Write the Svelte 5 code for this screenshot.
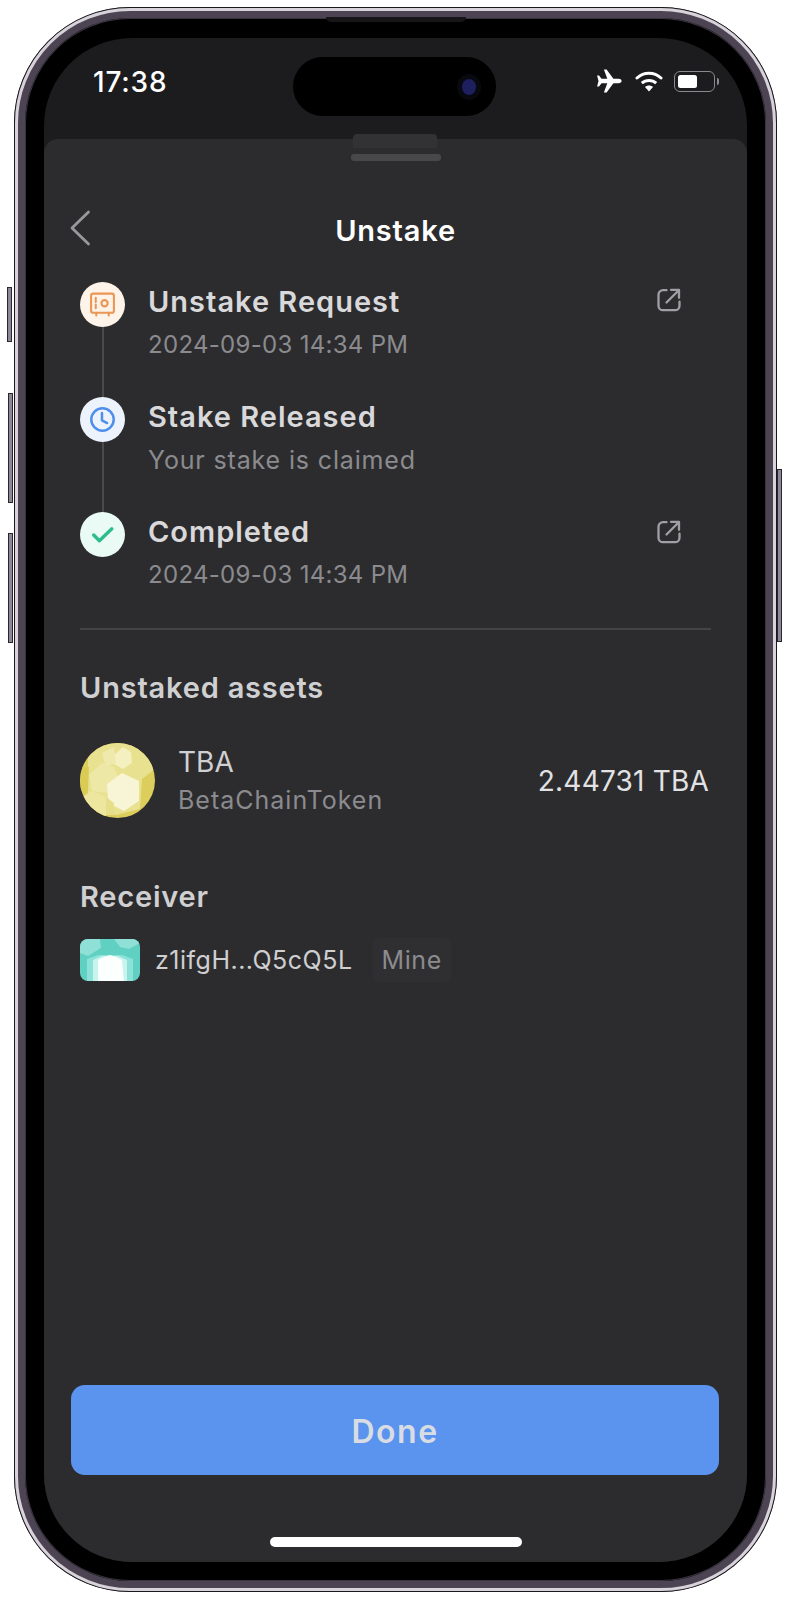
<script>
  const steps = [
    { title: "Unstake Request", sub: "2024-09-03 14:34 PM", kind: "safe", link: true, date: true },
    { title: "Stake Released", sub: "Your stake is claimed", kind: "clock", link: false, date: false },
    { title: "Completed", sub: "2024-09-03 14:34 PM", kind: "check", link: true, date: true },
  ];
</script>

<div class="page">
  <div class="phone">
    <span class="btn btn-mute"></span>
    <span class="btn btn-up"></span>
    <span class="btn btn-down"></span>
    <span class="btn btn-power"></span>
    <span class="speaker"></span>

    <div class="screen">
      <div class="status">
        <span class="time">17:38</span>
        <div class="island"><span class="camera"></span></div>
        <div class="status-icons">
          <svg class="plane" viewBox="0 0 26 24" aria-hidden="true">
            <path
              d="M25.6 12c0-1.3-1.4-2.2-3-2.2h-5.2L10.6.4H7.9l3.4 9.4H5.6L3 6.6H1.1l1.4 5.4-1.4 5.4H3l2.6-3.2h5.7L7.9 23.6h2.7l6.8-9.4h5.2c1.6 0 3-.9 3-2.2z"
              fill="#fff"
            />
          </svg>
          <svg class="wifi" viewBox="0 0 28 21" aria-hidden="true">
            <path d="M14 20.6l-4-4.6c2.2-2 5.800-2 8 0z" fill="#fff" />
            <path d="M6.800 12.200c4.100-3.700 10.300-3.700 14.400 0" fill="none" stroke="#fff" stroke-width="3" />
            <path d="M2 7c6.800-6.300 17.200-6.300 24 0" fill="none" stroke="#fff" stroke-width="3" stroke-linecap="round" />
          </svg>
          <div class="battery"><span class="level"></span></div>
          <span class="nub"></span>
        </div>
      </div>

      <div class="sheet">
        <div class="peek"></div>
        <div class="handle"></div>

        <header class="nav">
          <svg class="back" viewBox="0 0 22 36" aria-hidden="true">
            <path d="M19.500 2 L3 18 L19.500 34" fill="none" stroke="#98989c" stroke-width="2.800" stroke-linecap="round" stroke-linejoin="round" />
          </svg>
          <h1>Unstake</h1>
        </header>

        <ul class="timeline">
          {#each steps as step, i}
            <li class="step">
              <div class="rail">
                <div class="node {step.kind}">
                  {#if step.kind === "safe"}
                    <svg viewBox="0 0 26 26" aria-hidden="true">
                      <rect x="2" y="2.500" width="22" height="18.500" rx="2" fill="none" stroke="#ec9655" stroke-width="2" />
                      <path d="M6.500 6.500v4M6.500 13v3.500M7 21v2.500M19 21v2.500" stroke="#ec9655" stroke-width="2" stroke-linecap="round" fill="none" />
                      <circle cx="15" cy="11.800" r="3" fill="none" stroke="#ec9655" stroke-width="2" />
                    </svg>
                  {:else if step.kind === "clock"}
                    <svg viewBox="0 0 26 26" aria-hidden="true">
                      <circle cx="13" cy="13" r="10.800" fill="none" stroke="#4f8fec" stroke-width="2.400" />
                      <path d="M12.500 6.800v7l5 2.600" fill="none" stroke="#4f8fec" stroke-width="2.400" stroke-linecap="round" stroke-linejoin="round" />
                    </svg>
                  {:else}
                    <svg viewBox="0 0 26 26" aria-hidden="true">
                      <path d="M4.500 13.500l5.500 5.500L22 7.500" fill="none" stroke="#2bbd8a" stroke-width="3.200" stroke-linecap="round" stroke-linejoin="round" />
                    </svg>
                  {/if}
                </div>
                {#if i < steps.length - 1}
                  <span class="line"></span>
                {/if}
              </div>
              <div class="step-text">
                <div class="step-title">{step.title}</div>
                <div class="step-sub" class:date={step.date}>{step.sub}</div>
              </div>
              {#if step.link}
                <svg class="ext" viewBox="0 0 24 24" aria-hidden="true">
                  <path d="M9.500 2.200H6a4.500 4.500 0 0 0-4.500 4.500v11A4.500 4.500 0 0 0 6 22.200h12a4.500 4.500 0 0 0 4.500-4.500v-4" fill="none" stroke="#a0a0a4" stroke-width="2.300" stroke-linecap="round" />
                  <path d="M9.500 14.500L21.500 2.500M14 1.800h8v8" fill="none" stroke="#a0a0a4" stroke-width="2.300" stroke-linecap="round" stroke-linejoin="round" />
                </svg>
              {/if}
            </li>
          {/each}
        </ul>

        <div class="divider"></div>

        <h2 class="assets-title">Unstaked assets</h2>
        <div class="asset">
          <svg class="token" viewBox="0 0 75 75" aria-hidden="true">
            <defs>
              <clipPath id="coin"><circle cx="37.500" cy="37.500" r="37.500" /></clipPath>
            </defs>
            <g clip-path="url(#coin)">
              <rect width="75" height="75" fill="#dccd5c" />
              <polygon points="8,-4 72,-4 75,26 62,36 60,66 36,72 8,60" fill="#e8e18f" />
              <polygon points="34,12 43,4 51,9 52,20 43,26 34,21" fill="#f4f0c0" />
              <polygon points="22,10 34,4 36,20 26,24" fill="#efe9ae" />
              <polygon points="9,32 22,20 34,24 38,34 27,50 12,48" fill="#eee8a6" />
              <polygon points="2,54 12,48 26,54 26,75 8,75" fill="#ece69f" />
              <polygon points="27,41 42,30 59,38 59,58 44,68 28,60" fill="#f8f5d6" />
              <polygon points="26,54 34,60 34,72 26,72" fill="#e6de8a" />
              <polygon points="0,24 9,24 8,48 0,50" fill="#dacb55" />
            </g>
          </svg>
          <div class="asset-name">
            <div class="symbol">TBA</div>
            <div class="full-name">BetaChainToken</div>
          </div>
          <div class="amount">2.44731 TBA</div>
        </div>

        <h2 class="receiver-title">Receiver</h2>
        <div class="receiver">
          <svg class="avatar" viewBox="0 0 60 42" aria-hidden="true">
            <defs>
              <clipPath id="ava"><rect width="60" height="42" rx="8" /></clipPath>
            </defs>
            <g clip-path="url(#ava)">
              <rect width="60" height="42" fill="#5fd0c2" />
              <polygon points="0,0 20,0 21,9 8,17 0,14" fill="#8fe0d6" />
              <polygon points="34,0 60,0 60,4 49,10 40,8" fill="#8fe0d6" />
              <polygon points="7,20 18,16 42,16 53,20 53,42 7,42" fill="#8ce2d8" />
              <polygon points="13,21 22,17 38,17 47,21 47,42 13,42" fill="#c8f4ee" />
              <polygon points="18,21 24,18 30,16 36,18 42,21 44,42 18,42" fill="#fbfffe" />
            </g>
          </svg>
          <span class="address">z1ifgH...Q5cQ5L</span>
          <span class="chip">Mine</span>
        </div>

        <div class="spacer"></div>

        <button class="done">Done</button>
        <div class="home"></div>
      </div>
    </div>
  </div>
</div>

<style>
  :global(body) {
    margin: 0;
    background: #fff;
  }

  .page {
    width: 790px;
    height: 1600px;
    box-sizing: border-box;
    padding: 7px 13px 8px 14px;
    font-family: Inter, "Noto Sans", sans-serif;
  }

  /* Phone frame */
  .phone {
    position: relative;
    box-sizing: border-box;
    height: 100%;
    padding: 20px 19px 19px;
    border-radius: 116px;
    background: #000;
    border: 11px solid #4c4452;
    outline: 1px solid #1a181c;
    outline-offset: -1px;
    box-shadow: inset 0 0 0 1px #3a3440;
  }

  .phone::before {
    content: "";
    position: absolute;
    inset: -10px;
    border-radius: 115px;
    border: 3px solid #d8d2da;
    pointer-events: none;
  }

  .btn {
    position: absolute;
    width: 5px;
    background: #8e8798;
    border: 1px solid #2a2630;
    box-sizing: border-box;
  }

  .btn-mute {
    left: -18px;
    top: 269px;
    height: 55px;
  }

  .btn-up {
    left: -17px;
    top: 375px;
    height: 110px;
  }

  .btn-down {
    left: -17px;
    top: 515px;
    height: 110px;
  }

  .btn-power {
    right: -16px;
    top: 451px;
    height: 173px;
  }

  .speaker {
    position: absolute;
    top: -1px;
    left: 301px;
    width: 140px;
    height: 5px;
    background: #161517;
    border-radius: 0 0 5px 5px;
  }

  .screen {
    display: flex;
    flex-direction: column;
    height: 100%;
    border-radius: 88px;
    overflow: hidden;
    background: #1c1c1e;
  }

  /* Status bar */
  .status {
    flex: 0 0 101px;
    display: flex;
    align-items: flex-start;
    box-sizing: border-box;
    padding: 19px 28px 0 49px;
  }

  .time {
    width: 73px;
    margin-top: 10px;
    color: #fff;
    font-size: 28px;
    letter-spacing: 0.8px;
    line-height: 30px;
    font-weight: 500;
    white-space: nowrap;
  }

  .island {
    display: flex;
    align-items: center;
    justify-content: flex-end;
    width: 204px;
    height: 59px;
    margin-left: 127px;
    padding-right: 20px;
    box-sizing: border-box;
    border-radius: 30px;
    background: #000;
  }

  .camera {
    width: 14px;
    height: 16px;
    border-radius: 50%;
    background: #1d1f5e;
    box-shadow: 0 0 0 5px #08080f;
  }

  .status-icons {
    display: flex;
    align-items: center;
    margin-left: 100px;
    margin-top: 12px;
  }

  .plane {
    width: 26px;
    height: 24px;
  }

  .wifi {
    width: 28px;
    height: 21px;
    margin-left: 13px;
  }

  .battery {
    width: 41px;
    height: 21px;
    margin-left: 11px;
    box-sizing: border-box;
    padding: 3px;
    border: 1.500px solid #8a8a8e;
    border-radius: 6px;
  }

  .level {
    display: block;
    width: 19px;
    height: 100%;
    background: #fff;
    border-radius: 2.500px;
  }

  .nub {
    width: 2px;
    height: 7px;
    margin-left: 2px;
    background: #8a8a8e;
    border-radius: 0 2px 2px 0;
  }

  /* Sheet */
  .sheet {
    position: relative;
    flex: 1;
    display: flex;
    flex-direction: column;
    box-sizing: border-box;
    padding: 0 36px 15px;
    border-radius: 14px 14px 0 0;
    background: #2c2c2e;
  }

  .peek {
    position: absolute;
    top: -5px;
    left: 309px;
    width: 84px;
    height: 14px;
    background: #323234;
    border-radius: 4px 4px 0 0;
  }

  .handle {
    position: relative;
    align-self: center;
    width: 90px;
    height: 7px;
    margin-top: 15px;
    background: #48484a;
    border-radius: 3px;
  }

  .nav {
    position: relative;
    display: flex;
    justify-content: center;
    align-items: center;
    height: 52px;
    margin-top: 44px;
  }

  .back {
    position: absolute;
    left: -11px;
    top: 5px;
    width: 22px;
    height: 36px;
  }

  h1 {
    margin: 0;
    color: #fff;
    font-size: 29px;
    font-weight: 600;
    letter-spacing: 0.8px;
    line-height: 32px;
  }

  /* Timeline */
  .timeline {
    list-style: none;
    margin: 25px 0 0;
    padding: 0;
  }

  .step {
    display: flex;
    align-items: flex-start;
    height: 115px;
  }

  .step:last-child {
    height: 99px;
  }

  .rail {
    display: flex;
    flex-direction: column;
    align-items: center;
    align-self: stretch;
    width: 45px;
    flex: none;
  }

  .node {
    display: flex;
    align-items: center;
    justify-content: center;
    flex: none;
    width: 45px;
    height: 45px;
    border-radius: 50%;
  }

  .node svg {
    width: 27px;
    height: 27px;
  }

  .safe {
    background: #fdf3e9;
  }

  .clock {
    background: #edf3fd;
  }

  .check {
    background: #eafaf5;
  }

  .line {
    flex: 1;
    width: 2px;
    background: #4a4a4c;
  }

  .step-text {
    flex: 1;
    margin-left: 23px;
    padding-top: 1px;
  }

  .step-title {
    color: #d9d9db;
    font-size: 29px;
    font-weight: 600;
    letter-spacing: 1px;
    line-height: 38px;
  }

  .step-sub {
    margin-top: 8px;
    color: #8b8b8f;
    font-size: 25px;
    letter-spacing: 0.85px;
    line-height: 32px;
  }

  .step-sub.date {
    font-size: 24px;
    letter-spacing: 0.3px;
  }

  .ext {
    flex: none;
    width: 24px;
    height: 24px;
    margin: 6px 30px 0 0;
  }

  .step:last-child .ext {
    margin-top: 8px;
  }

  .divider {
    height: 2px;
    margin-top: 17px;
    margin-right: 0;
    background: #444446;
  }

  h2 {
    margin: 0;
    color: #d0d0d2;
    font-size: 29px;
    font-weight: 600;
    letter-spacing: 0.8px;
    line-height: 36px;
  }

  .assets-title {
    margin-top: 40px;
  }

  .asset {
    display: flex;
    align-items: center;
    margin-top: 37px;
  }

  .token {
    flex: none;
    width: 75px;
    height: 75px;
  }

  .asset-name {
    flex: 1;
    margin-left: 23px;
  }

  .symbol {
    color: #d0d0d2;
    font-size: 28px;
    line-height: 36px;
  }

  .full-name {
    margin-top: 2px;
    color: #8b8b8f;
    font-size: 25px;
    letter-spacing: 1px;
    line-height: 36px;
  }

  .amount {
    margin-right: 2px;
    color: #e2e2e4;
    font-size: 28px;
    letter-spacing: 0.2px;
  }

  .receiver-title {
    margin-top: 61px;
  }

  .receiver {
    display: flex;
    align-items: center;
    margin-top: 23px;
  }

  .avatar {
    flex: none;
    width: 60px;
    height: 42px;
  }

  .address {
    margin-left: 15px;
    color: #cfcfd1;
    font-size: 25px;
    letter-spacing: 0.5px;
  }

  .chip {
    margin-left: 20px;
    padding: 6px 9px;
    color: #8b8b8f;
    font-size: 25px;
    letter-spacing: 0.6px;
    line-height: 32px;
    background: #2f2f31;
    border-radius: 6px;
  }

  .spacer {
    flex: 1;
  }

  .done {
    display: block;
    flex: none;
    height: 90px;
    margin: 0 -8px 0 -9px;
    padding: 2px 0 0;
    border: none;
    border-radius: 14px;
    background: #5b94ef;
    color: #d9dde3;
    font-family: inherit;
    font-size: 32px;
    font-weight: 600;
    letter-spacing: 1.5px;
  }

  .home {
    flex: none;
    align-self: center;
    width: 252px;
    height: 10px;
    margin-top: 62px;
    background: #fff;
    border-radius: 5px;
  }
</style>
